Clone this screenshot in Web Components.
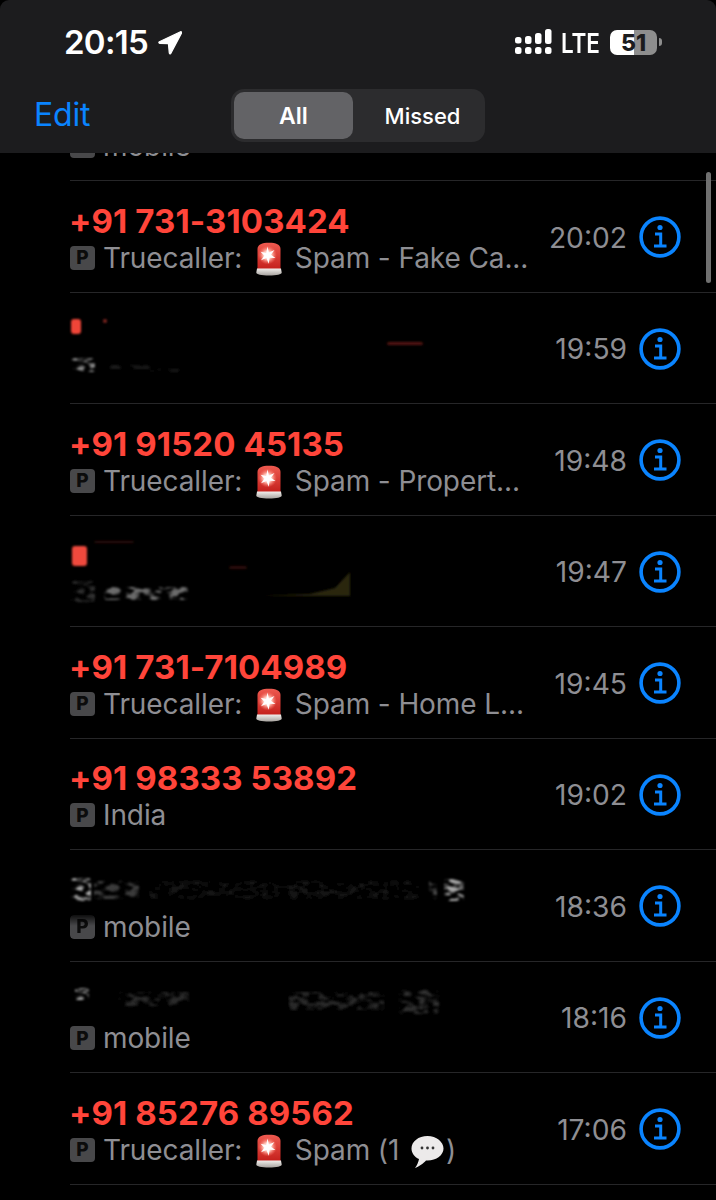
<!DOCTYPE html>
<html>
<head>
<meta charset="utf-8">
<style>
  html, body { margin: 0; background: #000; }
  body { width: 716px; height: 1200px; overflow: hidden; font-family: Inter, "Noto Sans", sans-serif; }
</style>
</head>
<body>
<recents-screen>
  <status-bar slot="header"></status-bar>
  <nav-header slot="header"></nav-header>

  <call-row>
    <sub-line>mobile</sub-line>
  </call-row>
  <call-row time="20:02" name="+91 731-3103424">
    <sub-line>Truecaller: <siren-emoji></siren-emoji> Spam - Fake Ca...</sub-line>
  </call-row>
  <call-row time="19:59">
    <smudge-line slot="name" solid="72,6,10,15,#f04438,1 104,6,4,4,#a03028,.8 388,29,36,3,#7a2018,.7"></smudge-line>
    <smudge-line blobs="71,7,24,14,#999,.9 110,14,40,4,#333,.5 150,18,30,3,#2a2a2a,.6"></smudge-line>
  </call-row>
  <call-row time="19:48" name="+91 91520 45135">
    <sub-line>Truecaller: <siren-emoji></siren-emoji> Spam - Propert...</sub-line>
  </call-row>
  <call-row time="19:47">
    <smudge-line slot="name" solid="73,10,15,20,#ef4a3c,1 95,5,40,2,#5a1a14,.5 230,30,18,3,#5a1a14,.5"></smudge-line>
    <smudge-line poly="190,22 240,20 265,14 280,-2 280,22" blobs="71,7,24,21,#444,.7 104,13,84,13,#999,.7"></smudge-line>
  </call-row>
  <call-row time="19:45" name="+91 731-7104989">
    <sub-line>Truecaller: <siren-emoji></siren-emoji> Spam - Home L...</sub-line>
  </call-row>
  <call-row time="19:02" name="+91 98333 53892">
    <sub-line>India</sub-line>
  </call-row>
  <call-row time="18:36">
    <smudge-line slot="name" blobs="72,7,20,23,#bbb,.9 95,10,45,18,#555,.7 150,10,270,18,#141414,.9 430,8,8,20,#666,.7 445,8,20,22,#bbb,.9"></smudge-line>
    <sub-line fade>mobile</sub-line>
  </call-row>
  <call-row time="18:16">
    <smudge-line slot="name" blobs="76,6,14,12,#bbb,.9 114,6,5,6,#ccc,.9 120,10,70,14,#333,.8 290,10,95,18,#2c2c2c,.9 400,8,40,24,#3c3c3c,.8"></smudge-line>
    <sub-line>mobile</sub-line>
  </call-row>
  <call-row time="17:06" name="+91 85276 89562">
    <sub-line>Truecaller: <siren-emoji></siren-emoji> Spam (1 <bubble-emoji></bubble-emoji>)</sub-line>
  </call-row>
  <call-row></call-row>

  <scroll-thumb slot="overlay"></scroll-thumb>
</recents-screen>

<script>
class RecentsScreen extends HTMLElement {
  connectedCallback() {
    this.attachShadow({ mode: 'open' }).innerHTML = `
      <style>
        :host { display: flex; flex-direction: column; position: relative; width: 716px; height: 1200px; background: #000; overflow: hidden; }
        header { height: 153px; flex: none; background: #1c1c1e; border-radius: 9px 9px 0 0; position: relative; z-index: 1; }
        main { flex: 1; overflow: hidden; }
        .scroll { margin-top: -83.5px; }
      </style>
      <header><slot name="header"></slot></header>
      <main><div class="scroll"><slot></slot></div></main>
      <slot name="overlay"></slot>`;
  }
}

class StatusBar extends HTMLElement {
  connectedCallback() {
    this.attachShadow({ mode: 'open' }).innerHTML = `
      <style>
        :host { display: flex; align-items: center; justify-content: space-between; height: 84px; padding: 0 54px 0 64px; color: #fff; font-family: Inter, sans-serif; }
        .left, .right { display: flex; align-items: center; }
        .clock { font-size: 33px; font-weight: 600; letter-spacing: -.7px; }
        .arrow { margin-left: 10px; }
        .lte { font-size: 22.5px; font-weight: 600; margin: 0 10px 0 9px; transform: scaleY(1.2); }
        .batt { width: 47px; height: 25px; border-radius: 7px; background: linear-gradient(90deg, #fff 0 51%, #8e8e8e 51%); color: #1c1c1e; font-size: 23px; font-weight: 800; text-align: center; line-height: 26px; }
        .nub { width: 3px; height: 8px; background: #8e8e8e; border-radius: 0 3px 3px 0; margin-left: 2px; }
      </style>
      <div class="left">
        <span class="clock">20:15</span>
        <svg class="arrow" width="24" height="25" viewBox="0 0 24 24"><path d="M22.5 1.2 1.400 11.200c-.9.5-.6 1.500.3 1.600l8.700.4.9 9.300c.1 1 1.200 1.200 1.600.3L23.600 2.400c.3-.8-.4-1.500-1.100-1.200Z" fill="#fff" stroke="#fff" stroke-width="1.200" stroke-linejoin="round"/></svg>
      </div>
      <div class="right">
        <svg width="37" height="26" viewBox="0 0 37 26" fill="#fff">
          <rect x="0" y="8" width="6.500" height="6.500" rx="2.500"/><rect x="0" y="18" width="6.500" height="7" rx="2.500"/>
          <rect x="10" y="7" width="6.500" height="8" rx="2.500"/><rect x="10" y="18" width="6.500" height="7" rx="2.500"/>
          <rect x="20" y="4" width="6.500" height="11" rx="2.500"/><rect x="20" y="18" width="6.500" height="7" rx="2.500"/>
          <rect x="30" y="0" width="6.500" height="15" rx="2.500"/><rect x="30" y="18" width="6.500" height="7" rx="2.500"/>
        </svg>
        <span class="lte">LTE</span>
        <div class="batt">51</div>
        <div class="nub"></div>
      </div>`;
  }
}

class NavHeader extends HTMLElement {
  connectedCallback() {
    this.attachShadow({ mode: 'open' }).innerHTML = `
      <style>
        :host { display: grid; grid-template-columns: 231px 254px; align-items: center; height: 53px; margin-top: 5px; font-family: Inter, sans-serif; }
        .edit { color: #0a84ff; font-size: 32px; padding: 0 0 3px 34px; letter-spacing: -.2px; }
      </style>
      <span class="edit">Edit</span>
      <seg-control></seg-control>`;
  }
}

class SegControl extends HTMLElement {
  connectedCallback() {
    this.attachShadow({ mode: 'open' }).innerHTML = `
      <style>
        :host { display: grid; grid-template-columns: 119px 1fr; box-sizing: border-box; height: 53px; padding: 3px; background: #2c2c2e; border-radius: 13px; color: #fff; font-size: 22px; font-weight: 500; }
        div { display: flex; align-items: center; justify-content: center; border-radius: 10px; }
        .on { background: #636366; font-size: 23px; font-weight: 600; }
        .off { padding-left: 10px; }
      </style>
      <div class="on">All</div>
      <div class="off">Missed</div>`;
  }
}

class CallRow extends HTMLElement {
  connectedCallback() {
    const name = this.getAttribute('name') || '';
    const time = this.getAttribute('time');
    this.attachShadow({ mode: 'open' }).innerHTML = `
      <style>
        :host { display: grid; grid-template-columns: 1fr auto auto; align-items: center; box-sizing: border-box; height: 111.5px; margin-left: 70px; padding-right: 35px; border-bottom: 1px solid #262628; font-family: Inter, sans-serif; }
        .text { padding-top: 6px; min-width: 0; }
        .name { display: block; height: 38px; line-height: 38px; margin-left: -1px; color: #ff453a; font-size: 33px; font-weight: 700; letter-spacing: .1px; white-space: nowrap; }
        .time { color: #8e8e93; font-size: 28.2px; margin-right: 12px; padding-top: 3px; }
        info-icon { margin-top: 2px; }
      </style>
      <div class="text">
        <span class="name"><slot name="name">${name}</slot></span>
        <slot></slot>
      </div>
      ${time ? `<span class="time">${time}</span><info-icon></info-icon>` : ''}`;
  }
}

class SubLine extends HTMLElement {
  connectedCallback() {
    this.attachShadow({ mode: 'open' }).innerHTML = `
      <style>
        :host { display: flex; align-items: center; height: 38px; margin-top: -1px; color: #8e8e93; font-size: 28px; letter-spacing: -.1px; white-space: nowrap; font-family: Inter, sans-serif; }
        :host([fade]) .p { -webkit-mask-image: linear-gradient(#0003, #000 45%); mask-image: linear-gradient(#0003, #000 45%); }
        .p { flex: none; display: flex; align-items: center; justify-content: center; width: 25px; height: 24px; margin-right: 8px; background: #48484a; border-radius: 4px; color: #0c0c0c; font-size: 19px; font-weight: 800; }
        .t { display: block; line-height: 38px; }
      </style>
      <span class="p">P</span><span class="t"><slot></slot></span>`;
  }
}

class InfoIcon extends HTMLElement {
  connectedCallback() {
    this.attachShadow({ mode: 'open' }).innerHTML = `
      <style>:host { display: block; width: 42px; height: 42px; } svg { display: block; }</style>
      <svg width="42" height="42" viewBox="0 0 42 42" fill="none" stroke="#0a84ff">
        <circle cx="21" cy="21" r="18.900" stroke-width="3.600"/>
        <circle cx="21" cy="11.500" r="2.600" fill="#0a84ff" stroke="none"/>
        <path d="M16 18H21.700V29.500M15 30H27.500" stroke-width="3"/>
      </svg>`;
  }
}

class SirenEmoji extends HTMLElement {
  connectedCallback() {
    this.attachShadow({ mode: 'open' }).innerHTML = `
      <style>:host { display: inline-block; width: 26px; height: 34px; margin: 0 5px 0 6px; vertical-align: -8px; } svg { display: block; }</style>
      <svg width="26" height="34" viewBox="0 0 26 34">
        <defs>
          <linearGradient id="g" x1="0" x2="0" y1="0" y2="1"><stop offset="0" stop-color="#ee5a50"/><stop offset="1" stop-color="#c4201c"/></linearGradient>
          <linearGradient id="s" x1="0" x2="0" y1="0" y2="1"><stop offset="0" stop-color="#f2efec"/><stop offset="1" stop-color="#a8a4a0"/></linearGradient>
          <radialGradient id="f" cx=".5" cy=".5" r=".5"><stop offset="0" stop-color="#fff"/><stop offset=".45" stop-color="#ffc4b8"/><stop offset="1" stop-color="#ff6f60" stop-opacity="0"/></radialGradient>
        </defs>
        <path d="M1.500 27V7C1.500 2.500 6 .7 13 .7s11.500 1.800 11.500 6.300v20Z" fill="url(#g)"/>
        <path d="M1 26.500h24l.7 4c0 2-5 3-12.700 3S.3 32.500.3 30.500Z" fill="url(#s)"/>
        <circle cx="11.500" cy="13" r="9.500" fill="url(#f)"/>
        <path d="M11.500 4.500l1.400 6 5.600-2.500-3.600 4.800 4.600 3.200-5.800-.3-1 6-2.300-5.600-5.400 2.200 3.400-4.600-3.800-4 5.600 1.200Z" fill="#fff"/>
      </svg>`;
  }
}

class BubbleEmoji extends HTMLElement {
  connectedCallback() {
    this.attachShadow({ mode: 'open' }).innerHTML = `
      <style>:host { display: inline-block; width: 35px; height: 34px; margin: 0 1px 0 3px; vertical-align: -9px; } svg { display: block; }</style>
      <svg width="35" height="34" viewBox="0 0 34 34">
        <path d="M17 1C8 1 1 6.500 1 13.500c0 4.500 3 8.500 7.500 10.500-.3 2.500-2 6.500-4 9 3.500-1 9-5 11-7.500h1.500C26 25.500 33 20 33 13.500S26 1 17 1Z" fill="#eceaea"/>
        <circle cx="11.500" cy="13" r="1.400" fill="#333"/><circle cx="17" cy="13" r="1.400" fill="#333"/><circle cx="22.500" cy="13" r="1.400" fill="#333"/>
      </svg>`;
  }
}

// redacted names, drawn as smudges. x,y,w,h,colour,opacity (y inside the 38px line)
class SmudgeLine extends HTMLElement {
  rects(attr) {
    return (this.getAttribute(attr) || '').trim().split(/\s+/).filter(Boolean).map(b => {
      const p = b.split(',');
      return `<rect x="${p[0] - 70}" y="${p[1]}" width="${p[2]}" height="${p[3]}" rx="3" fill="${p[4]}" opacity="${p[5]}"/>`;
    }).join('');
  }
  connectedCallback() {
    const poly = this.getAttribute('poly');
    this.attachShadow({ mode: 'open' }).innerHTML = `
      <style>:host { display: block; height: 38px; } svg { display: block; overflow: visible; }</style>
      <svg width="400" height="38">
        <filter id="grain" x="-5%" y="-50%" width="110%" height="200%">
          <feTurbulence type="fractalNoise" baseFrequency=".1 .2" numOctaves="2" seed="4"/>
          <feColorMatrix values="0 0 0 0 0 0 0 0 0 0 0 0 0 0 0 5 0 0 0 -2.200"/>
          <feComposite in="SourceGraphic" operator="in"/>
          <feGaussianBlur stdDeviation="1.300"/>
        </filter>
        <filter id="soft"><feGaussianBlur stdDeviation="1.200"/></filter>
        ${poly ? `<polygon points="${poly}" fill="#2b2610" filter="url(#soft)"/>` : ''}
        <g filter="url(#soft)">${this.rects('solid')}</g>
        <g filter="url(#grain)">${this.rects('blobs')}</g>
      </svg>`;
  }
}

class ScrollThumb extends HTMLElement {
  connectedCallback() {
    this.attachShadow({ mode: 'open' }).innerHTML = `
      <style>:host { position: absolute; left: 706px; top: 172px; width: 5px; height: 111px; background: #707070; border-radius: 3px; }</style>`;
  }
}

customElements.define('scroll-thumb', ScrollThumb);
customElements.define('smudge-line', SmudgeLine);
customElements.define('bubble-emoji', BubbleEmoji);
customElements.define('siren-emoji', SirenEmoji);
customElements.define('info-icon', InfoIcon);
customElements.define('sub-line', SubLine);
customElements.define('call-row', CallRow);
customElements.define('seg-control', SegControl);
customElements.define('nav-header', NavHeader);
customElements.define('status-bar', StatusBar);
customElements.define('recents-screen', RecentsScreen);
</script>
</body>
</html>
